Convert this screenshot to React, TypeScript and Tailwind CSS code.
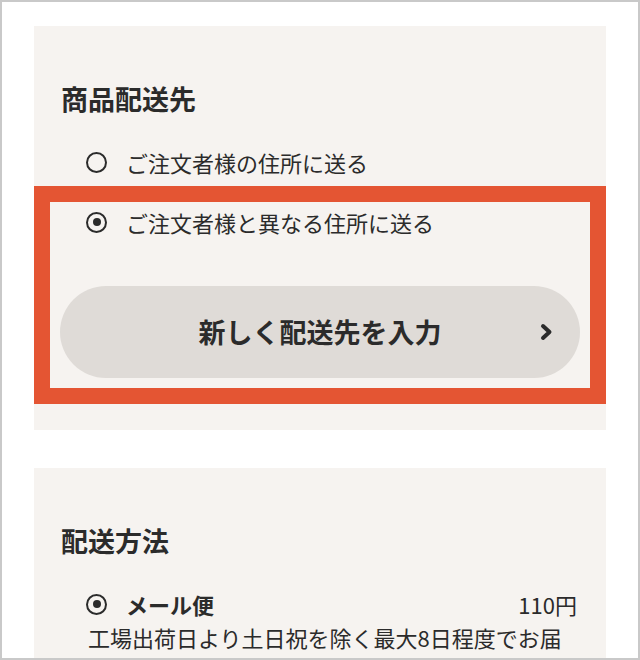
import React from 'react';

const font = { fontFamily: '"Noto Sans CJK JP", "Noto Sans", sans-serif' };

function Radio({ checked }: { checked?: boolean }) {
    return (
        <span className="flex h-[21px] w-[21px] shrink-0 items-center justify-center rounded-full border-[2.5px] border-[#2b2b2b]">
            {checked && <span className="h-[8px] w-[8px] rounded-full bg-[#2b2b2b]" />}
        </span>
    );
}

export default function App() {
    return (
        <div
            className="h-[660px] w-[640px] overflow-hidden border-2 border-[#c9c9c9] bg-white px-[32px] pt-[24px] text-[#2b2b2b]"
            style={font}
        >
            {/* 商品配送先 */}
            <section className="bg-[#f6f3f0] pt-[54px] pb-[26px]">
                <h2 className="pl-[27px] text-[27px] font-bold leading-[38px]">商品配送先</h2>
                <label className="mt-[24px] flex h-[40px] items-center gap-[19px] pl-[52px] text-[22px]">
                    <Radio />
                    <span>ご注文者様の住所に送る</span>
                </label>
                <div className="mt-[4px] border-[16px] border-[#e45533] px-[10px] pb-[10px]">
                    <label className="flex h-[40px] items-center gap-[19px] pl-[26px] text-[22px]">
                        <Radio checked />
                        <span>ご注文者様と異なる住所に送る</span>
                    </label>
                    <button className="relative mt-[44px] flex h-[92px] w-full items-center justify-center rounded-full bg-[#dfdbd7] text-[27px] font-bold">
                        新しく配送先を入力
                        <svg
                            className="absolute right-[26px] top-1/2 -translate-y-1/2"
                            width="15"
                            height="20"
                            viewBox="0 0 15 20"
                            fill="none"
                        >
                            <polyline
                                points="4,4 10.5,10 4,16"
                                stroke="#2b2b2b"
                                strokeWidth="4"
                                strokeLinecap="round"
                                strokeLinejoin="round"
                            />
                        </svg>
                    </button>
                </div>
            </section>

            {/* 配送方法 */}
            <section className="mt-[38px] h-[300px] bg-[#f6f3f0] pt-[54px]">
                <h2 className="pl-[27px] text-[27px] font-bold leading-[38px]">配送方法</h2>
                <label className="mt-[24px] flex h-[40px] items-center gap-[19px] pl-[52px] pr-[29px] text-[22px]">
                    <Radio checked />
                    <span className="font-bold">メール便</span>
                    <span className="ml-auto">110円</span>
                </label>
                <p className="whitespace-nowrap pl-[54px] pr-[29px] text-[22px] leading-[26px]">
                    工場出荷日より土日祝を除く最大8日程度でお届
                </p>
            </section>
        </div>
    );
}
